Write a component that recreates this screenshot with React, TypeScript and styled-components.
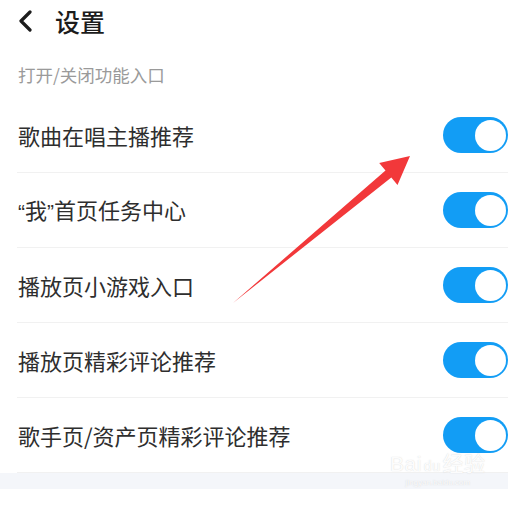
import styled, { createGlobalStyle } from 'styled-components'

const GlobalStyle = createGlobalStyle`
  html, body {
    margin: 0;
    padding: 0;
    background: #ffffff;
  }
  body {
    font-family: "Noto Sans CJK SC", "Noto Sans", sans-serif;
    overflow: hidden;
  }
`

const Toggle = ({ on }: { on: boolean }) => (
  <Track $on={on}>
    <Knob />
  </Track>
)

const BackIcon = () => (
  <svg width="16" height="22" viewBox="0 0 16 22">
    <path d="M13 2 L4 11 L13 20" fill="none" stroke="#1c1c1c" strokeWidth="3.2" strokeLinecap="round" strokeLinejoin="round" />
  </svg>
)

const Arrow = () => (
  <ArrowSvg width="508" height="506" viewBox="0 0 508 506">
    <polygon
      points="233,303 391.3,177.4 397.5,185 410,156 379.2,163 385.5,170.4"
      fill="#f2383a"
    />
  </ArrowSvg>
)

const App = () => {
  const items = [
    '歌曲在唱主播推荐',
    <>
      <Quote>“</Quote>我<Quote>”</Quote>首页任务中心
    </>,
    '播放页小游戏入口',
    '播放页精彩评论推荐',
    '歌手页/资产页精彩评论推荐',
  ]

  return (
    <Page>
      <GlobalStyle />
      <Header>
        <BackIcon />
        <Title>设置</Title>
      </Header>
      <SectionLabel>打开/关闭功能入口</SectionLabel>
      <List>
        {items.map((label, i) => (
          <Row key={i}>
            <Label>{label}</Label>
            <Toggle on />
          </Row>
        ))}
      </List>
      <Band />
      <Arrow />
      <Watermark>
        <WmMain>
          Bai<WmPaw>du</WmPaw>经验
        </WmMain>
        <WmSub>jingyan.baidu.com</WmSub>
      </Watermark>
    </Page>
  )
}

export default App

const Page = styled.div`
  position: relative;
  width: 508px;
  height: 506px;
  overflow: hidden;
  background: #fff;
`

const Header = styled.div`
  display: flex;
  align-items: center;
  height: 44px;
  padding: 0 0 2px 17px;
  box-sizing: border-box;
  gap: 22px;
`

const Title = styled.div`
  font-size: 25px;
  font-weight: 500;
  color: #1c1c1c;
  line-height: 1;
`

const SectionLabel = styled.div`
  height: 54px;
  box-sizing: border-box;
  padding: 19px 0 0 18px;
  font-size: 17.5px;
  line-height: 24px;
  color: #9a9a9a;
`

const List = styled.div`
  display: flex;
  flex-direction: column;
`

const Row = styled.div`
  display: flex;
  align-items: center;
  justify-content: space-between;
  height: 75px;
  margin-left: 17px;
  border-bottom: 1px solid #f1f1f1;
  box-sizing: border-box;
`

const Label = styled.div`
  font-size: 22px;
  color: #2e2e2e;
  line-height: 1;
  padding-left: 1px;
`

const Quote = styled.span`
  font-family: "Liberation Sans", sans-serif;
  font-size: 21px;
`

const Track = styled.div<{ $on: boolean }>`
  flex: none;
  width: 65px;
  height: 36px;
  border-radius: 18px;
  background: ${(p) => (p.$on ? '#129df5' : '#dcdcdc')};
  display: flex;
  align-items: center;
  justify-content: ${(p) => (p.$on ? 'flex-end' : 'flex-start')};
  padding: 0 2px;
  box-sizing: border-box;
`

const Knob = styled.div`
  width: 31px;
  height: 31px;
  border-radius: 50%;
  background: #fff;
`

const Band = styled.div`
  height: 16px;
  background: #f4f6fa;
`

const ArrowSvg = styled.svg`
  position: absolute;
  left: 0;
  top: 0;
  pointer-events: none;
`

const Watermark = styled.div`
  position: absolute;
  left: 390px;
  top: 452px;
  display: flex;
  flex-direction: column;
  align-items: center;
  font-family: "Liberation Sans", "Noto Sans CJK SC", sans-serif;
  color: rgba(255, 255, 255, 0.95);
  text-shadow: 0 0 1px rgba(170, 170, 170, 0.5);
`

const WmMain = styled.div`
  font-size: 21px;
  line-height: 24px;
  letter-spacing: 0.5px;
`

const WmPaw = styled.span`
  font-size: 14px;
  margin: 0 2px;
`

const WmSub = styled.div`
  font-size: 8px;
  line-height: 10px;
`
